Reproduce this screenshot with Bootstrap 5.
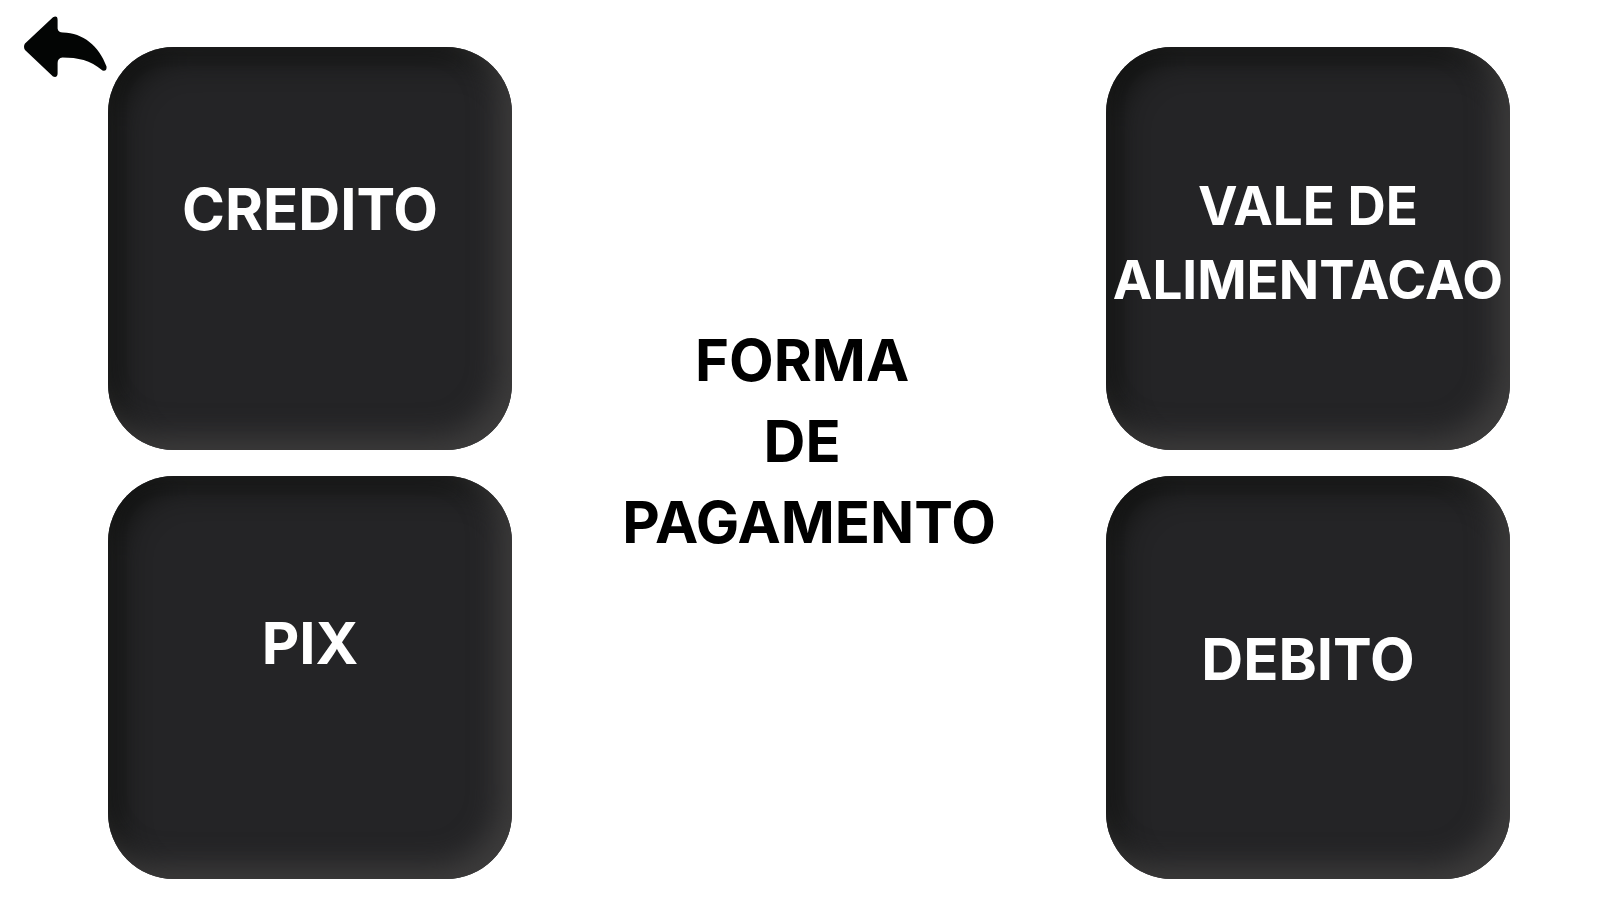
<!DOCTYPE html>
<html lang="pt-BR">
<head>
<meta charset="utf-8">
<meta name="viewport" content="width=device-width, initial-scale=1">
<title>Forma de pagamento</title>
<link href="https://cdn.jsdelivr.net/npm/bootstrap@5.3.0/dist/css/bootstrap.min.css" rel="stylesheet">
<style>
  body { font-family: Inter, "Liberation Sans", sans-serif; background: #fff; color: #000; }
  .pay-grid {
    display: grid;
    grid-template-columns: 108px minmax(0, 404fr) minmax(0, 594fr) minmax(0, 404fr);
    padding-right: 90px;
  }
  .back-link { padding: 16px 0 0 24px; color: #030504; }
  .pay-title { font-size: 58px; line-height: 81px; font-weight: 700; white-space: pre; padding-bottom: 17px; }
  .pay-column { padding: 47px 0 20px; gap: 26px; }
  .pay-option {
    aspect-ratio: 404 / 403;
    border: 0;
    border-radius: 66px;
    background: #242426;
    box-shadow: inset -14px -14px 28px #3d3c3c, inset 12px 12px 28px #111211;
    color: #fff;
    font-size: 58px;
    line-height: 80px;
    font-weight: 700;
    padding: 0 0 80px;
  }
  .pay-option.option-pix { padding-bottom: 70px; }
  .pay-option.option-debit { padding-bottom: 38px; }
  .pay-option.option-voucher { font-size: 53px; line-height: 74px; padding-bottom: 12px; }
</style>
</head>
<body>
<main class="pay-grid">
  <a class="back-link" href="#" aria-label="Voltar">
    <svg class="d-block" width="84" height="62" viewBox="0 0 84 62" fill="currentColor" aria-hidden="true">
      <path d="M1 27.500L29 1.200Q33.600-.8 33.600 4V12.500Q34 16.500 39 16.600C59 17 75 30 82.500 50.500Q83 55.500 78.500 54.500C66 44 54 41.600 38.500 41.500Q33.600 42 33.600 47V57.500Q33.500 62 29 60.500L1 34Q-1 30.500 1 27.500Z"/>
    </svg>
  </a>
  <div class="pay-column d-flex flex-column">
    <button type="button" class="pay-option d-flex align-items-center justify-content-center">CREDITO</button>
    <button type="button" class="pay-option option-pix d-flex align-items-center justify-content-center">PIX</button>
  </div>
  <h1 class="pay-title m-0 text-center align-self-center">FORMA 
DE 
PAGAMENTO</h1>
  <div class="pay-column d-flex flex-column">
    <button type="button" class="pay-option option-voucher d-flex align-items-center justify-content-center">VALE DE<br>ALIMENTACAO</button>
    <button type="button" class="pay-option option-debit d-flex align-items-center justify-content-center">DEBITO</button>
  </div>
</main>
<script src="https://cdn.jsdelivr.net/npm/bootstrap@5.3.0/dist/js/bootstrap.bundle.min.js"></script>
</body>
</html>
